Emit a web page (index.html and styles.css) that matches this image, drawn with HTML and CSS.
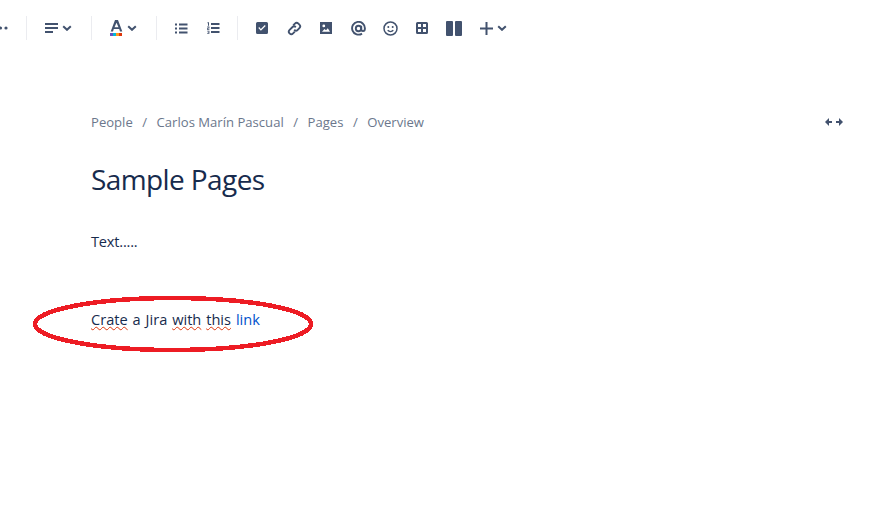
FILE: index.html
```html
<!DOCTYPE html>
<html lang="en">
<head>
<meta charset="utf-8">
<title>Sample Pages</title>
<link rel="stylesheet" href="styles.css">
</head>
<body>
<div class="toolbar">
  <div class="btn btn-more"><svg width="8" height="4" viewBox="0 0 8 4"><circle cx="0.5" cy="2" r="1.6"/><circle cx="6" cy="2" r="1.6"/></svg></div>
  <span class="divider"></span>
  <div class="btn btn-wide">
    <svg class="ic" width="13" height="12" viewBox="0 0 13 12"><rect x="0" y="1" width="13" height="2"/><rect x="0" y="5" width="13" height="2"/><rect x="0" y="9" width="8" height="2"/></svg>
    <svg class="chev" width="10" height="6" viewBox="0 0 10 6"><path d="M1.2 1.2 5 4.8 8.800 1.200"/></svg>
  </div>
  <span class="divider"></span>
  <div class="btn btn-wide">
    <svg class="ic" width="13" height="16" viewBox="0 0 13 16"><path d="M5 0h3l4.300 11.500H10L9.200 9H3.800L3 11.500H.7L5 0Zm1.500 2.800L4.500 7.200h4L6.500 2.800Z"/><rect x="0" y="13" width="3" height="3" fill="#6554c0"/><rect x="3" y="13" width="3" height="3" fill="#00b8d9"/><rect x="6" y="13" width="3" height="3" fill="#ff991f"/><rect x="9" y="13" width="3" height="3" fill="#de350b"/></svg>
    <svg class="chev" width="10" height="6" viewBox="0 0 10 6"><path d="M1.200 1.200 5 4.800 8.800 1.200"/></svg>
  </div>
  <span class="divider"></span>
  <div class="btn"><svg width="13" height="11" viewBox="0 0 13 11"><rect x="0" y="0.500" width="2" height="2"/><rect x="4" y="0.500" width="8.500" height="2"/><rect x="0" y="4.500" width="2" height="2"/><rect x="4" y="4.500" width="8.500" height="2"/><rect x="0" y="8.500" width="2" height="2"/><rect x="4" y="8.500" width="8.500" height="2"/></svg></div>
  <div class="btn btn-group-end"><svg width="13" height="12" viewBox="0 0 13 12"><path d="M0.500 0.300H2V3.700H1V1.200H.5ZM0.200 4.600H2.400V6.600H1V7.200H2.400V8H.2V6H1.600V5.400H.2ZM0.200 8.800H2.400V11.800H.2V11H1.600V10.600H.7V10H1.600V9.600H.2Z"/><rect x="4" y="1" width="8.500" height="2"/><rect x="4" y="5" width="8.500" height="2"/><rect x="4" y="9" width="8.500" height="2"/></svg></div>
  <span class="divider"></span>
  <div class="btn"><svg width="12" height="12" viewBox="0 0 12 12"><path fill-rule="evenodd" d="M1.500 0h9A1.500 1.500 0 0 1 12 1.500v9a1.500 1.500 0 0 1-1.500 1.500h-9A1.500 1.500 0 0 1 0 10.500v-9A1.500 1.500 0 0 1 1.500 0Zm1.700 5.100L2.300 6l2.600 2.700L9.700 4 8.800 3.100 4.900 6.900Z"/></svg></div>
  <div class="btn"><svg class="line" width="15" height="15" viewBox="0 0 15 15"><path d="M6.200 4.300 7.900 2.600a2.500 2.500 0 0 1 3.500 0l1 1a2.500 2.500 0 0 1 0 3.500L10.700 8.800a2.500 2.500 0 0 1-3.500 0"/><path d="M8.800 6.200a2.500 2.500 0 0 0-3.500 0L2.600 8.900a2.500 2.500 0 0 0 0 3.500l.0 0a2.500 2.500 0 0 0 3.500 0L7.800 10.700"/></svg></div>
  <div class="btn"><svg width="12" height="12" viewBox="0 0 12 12"><path fill-rule="evenodd" d="M0 0h12v12H0Zm2 9.800h8L7.800 6.200 6 8.200 4.500 7ZM3.800 2.500a1.400 1.400 0 1 0 0 2.800 1.400 1.400 0 0 0 0-2.800Z"/></svg></div>
  <div class="btn"><svg class="line" width="15" height="15" viewBox="0 0 15 15"><path d="M11 12.600A6.400 6.400 0 1 1 13.900 7.500c0 1.500-.7 2.600-1.900 2.600s-1.800-.8-1.800-2V4.700"/><circle cx="7.500" cy="7.500" r="2.700"/></svg></div>
  <div class="btn"><svg width="15" height="15" viewBox="0 0 15 15"><circle class="outline" cx="7.500" cy="7.500" r="6.500"/><circle cx="5.300" cy="6" r="1"/><circle cx="9.700" cy="6" r="1"/><path class="outline" d="M4.700 9.300c1.500 1.500 4.100 1.500 5.600 0"/></svg></div>
  <div class="btn"><svg width="12" height="12" viewBox="0 0 12 12"><path fill-rule="evenodd" d="M1.500 0h9A1.500 1.500 0 0 1 12 1.500v9a1.500 1.500 0 0 1-1.500 1.500h-9A1.500 1.500 0 0 1 0 10.500v-9A1.500 1.500 0 0 1 1.500 0ZM2 2v3h3V2Zm5 0v3h3V2ZM2 7v3h3V7Zm5 0v3h3V7Z"/></svg></div>
  <div class="btn"><svg width="16" height="15" viewBox="0 0 16 15"><rect x="0" y="0" width="7" height="15" rx="1"/><rect x="9" y="0" width="7" height="15" rx="1"/></svg></div>
  <div class="btn btn-wide">
    <svg width="13" height="13" viewBox="0 0 13 13"><rect x="5.500" y="0" width="2" height="13"/><rect x="0" y="5.500" width="13" height="2"/></svg>
    <svg class="chev" width="10" height="6" viewBox="0 0 10 6"><path d="M1.200 1.200 5 4.800 8.800 1.200"/></svg>
  </div>
</div>

<main class="page">
  <div class="crumb-row">
    <nav class="crumbs">
      <span>People</span><span class="sep">/</span><span>Carlos Marín Pascual</span><span class="sep">/</span><span>Pages</span><span class="sep">/</span><span>Overview</span>
    </nav>
    <svg class="expand" width="18" height="8" viewBox="0 0 18 8"><path d="M4 0 0 4l4 4V5h3V3H4Zm10 0 4 4-4 4V5h-3V3h3Z"/></svg>
  </div>
  <h1 class="title">Sample Pages</h1>
  <p class="para para-short">Text.....</p>
  <p class="para para-link"><span class="typo">Crate</span> a Jira <span class="typo">with</span> <span class="typo">this</span> <a class="link" href="#">link</a></p>
  <svg class="circle" width="296" height="72" viewBox="0 0 296 72"><ellipse cx="148" cy="36" rx="138" ry="26"/></svg>
</main>
</body>
</html>
```
FILE: styles.css
```css
html, body {
  margin: 0;
  padding: 0;
  background: #fff;
  height: 519px;
  overflow: hidden;
}
body {
  font-family: "Open Sans", "Noto Sans", sans-serif;
  color: #172b4d;
}
.toolbar {
  display: flex;
  align-items: center;
  height: 56px;
  fill: #42526e;
}
.btn {
  width: 32px;
  height: 32px;
  display: flex;
  align-items: center;
  justify-content: center;
  flex: none;
}
.btn-more {
  width: 18px;
  justify-content: flex-start;
  margin-right: 8px;
}
.btn-wide {
  width: 46px;
  gap: 4px;
  justify-content: flex-start;
  padding-left: 10px;
  box-sizing: border-box;
  margin-right: 10px;
}
.btn-group-end { margin-right: 8px; }
.divider {
  width: 1px;
  height: 24px;
  background: #ebecf0;
  flex: none;
  margin-right: 8px;
}
.ic { flex: none; }
.chev path {
  fill: none;
  stroke: #42526e;
  stroke-width: 2;
}
.line path, .line circle {
  fill: none;
  stroke: #42526e;
  stroke-width: 1.9;
}
.outline {
  fill: none;
  stroke: #42526e;
  stroke-width: 1.5;
}
.page {
  position: relative;
  padding: 56px 53px 0 91px;
}
.crumb-row {
  display: flex;
  justify-content: space-between;
  align-items: center;
  height: 20px;
}
.crumbs {
  display: flex;
  font-size: 13.1px;
  color: #6b778c;
}
.sep {
  margin: 0 9.5px;
}
.expand { fill: #42526e; }
.title {
  margin: 29px 0 0;
  font-size: 28px;
  letter-spacing: -0.6px;
  font-weight: 400;
  line-height: 36px;
  color: #172b4d;
}
.para {
  margin: 0;
  font-size: 14.6px;
  line-height: 20px;
}
.para-short {
  margin-top: 34px;
  letter-spacing: -0.2px;
}
.para-link {
  margin-top: 58px;
  word-spacing: 1.1px;
}
.typo {
  text-decoration: underline wavy #de350b 1px;
  text-decoration-skip-ink: none;
}
.link {
  color: #0052cc;
  text-decoration: none;
}
.circle {
  position: absolute;
  left: 25px;
  top: 232px;
  pointer-events: none;
}
.circle ellipse {
  fill: none;
  stroke: #ed1c24;
  stroke-width: 4.5;
  shape-rendering: crispEdges;
}
```
